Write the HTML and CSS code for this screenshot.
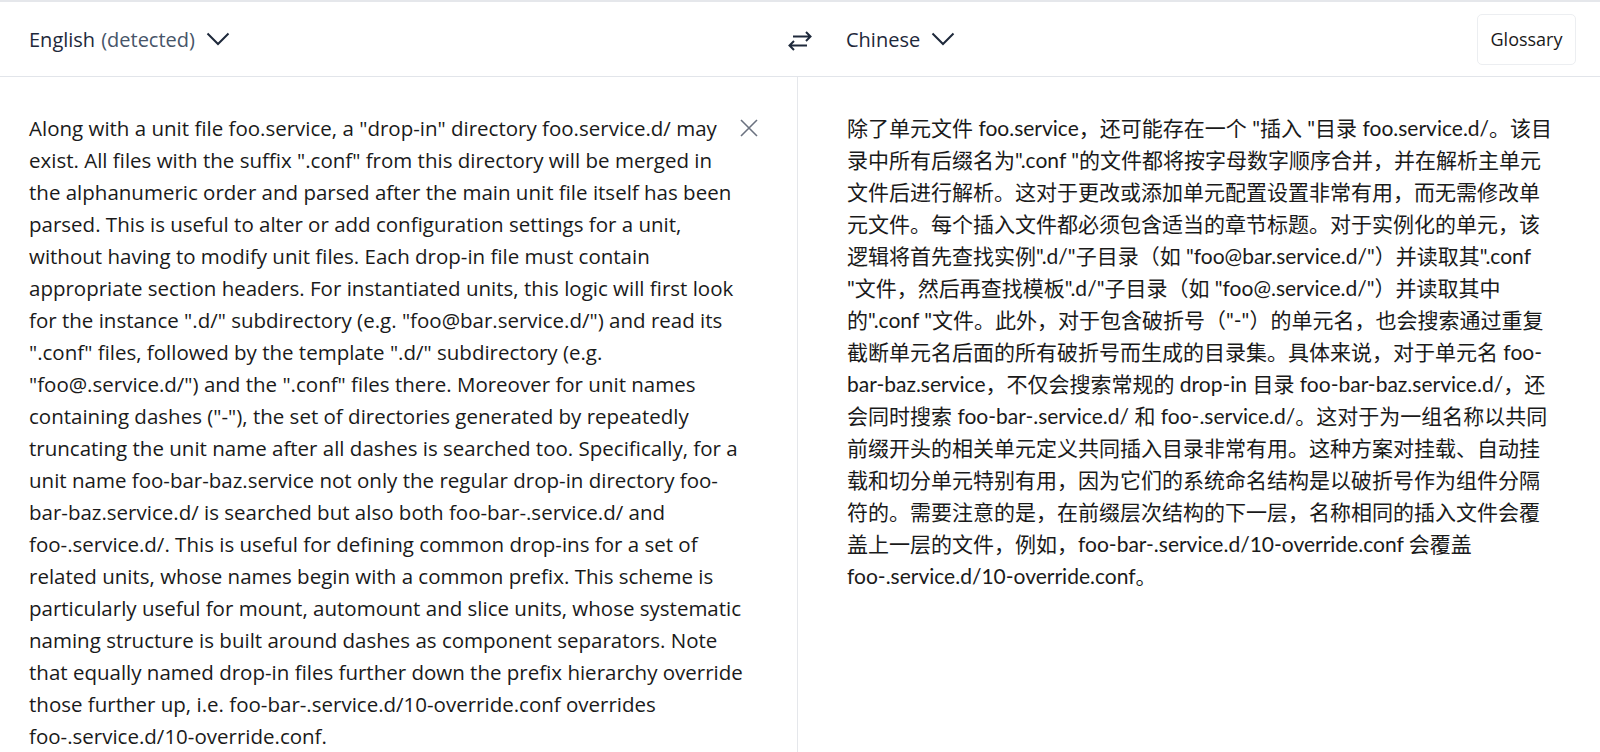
FILE: index.html
```html
<!DOCTYPE html>
<html lang="en">
<head>
    <meta charset="UTF-8">
    <meta name="viewport" content="width=device-width, initial-scale=1">
    <title>Translate</title>
    <link rel="stylesheet" href="styles.css">
</head>
<body>
    <div class="translator">
        <!-- 语言选择栏 -->
        <div class="lang-bar">
            <div class="lang-side">
                <button class="lang-select">
                    <span class="lang-name">English</span>
                    <span class="lang-note">(detected)</span>
                    <svg class="chevron" viewBox="0 0 24 14" width="24" height="14">
                        <path d="M1.5 1.5l10.5 10.5 10.5-10.5" />
                    </svg>
                </button>
            </div>
            <button class="swap-btn" title="Swap languages">
                <svg viewBox="0 0 24 24" width="24" height="24">
                    <path d="M5 9.5h17.5m-4.5-4.5l4.5 4.5-4.5 4.5" />
                    <path d="M19 18.5h-17.5m4.5-4.5l-4.5 4.5 4.5 4.5" />
                </svg>
            </button>
            <div class="lang-side lang-target">
                <button class="lang-select">
                    <span class="lang-name">Chinese</span>
                    <svg class="chevron" viewBox="0 0 24 14" width="24" height="14">
                        <path d="M1.5 1.5l10.5 10.5 10.5-10.5" />
                    </svg>
                </button>
                <button class="glossary-btn">Glossary</button>
            </div>
        </div>

        <!-- 原文和译文 -->
        <div class="panels">
            <div class="panel source-panel">
                <div class="source-text">Along with a unit file foo.service, a "drop-in" directory foo.service.d/ may exist. All files with the suffix ".conf" from this directory will be merged in the alphanumeric order and parsed after the main unit file itself has been parsed. This is useful to alter or add configuration settings for a unit, without having to modify unit files. Each drop-in file must contain appropriate section headers. For instantiated units, this logic will first look for the instance ".d/" subdirectory (e.g. "foo@bar.service.d/") and read its ".conf" files, followed by the template ".d/" subdirectory (e.g. "foo@.service.d/") and the ".conf" files there. Moreover for unit names containing dashes ("-"), the set of directories generated by repeatedly truncating the unit name after all dashes is searched too. Specifically, for a unit name foo-bar-baz.service not only the regular drop-in directory foo-bar-baz.service.d/ is searched but also both foo-bar-.service.d/ and foo-.service.d/. This is useful for defining common drop-ins for a set of related units, whose names begin with a common prefix. This scheme is particularly useful for mount, automount and slice units, whose systematic naming structure is built around dashes as component separators. Note that equally named drop-in files further down the prefix hierarchy override those further up, i.e. foo-bar-.service.d/10-override.conf overrides foo-.service.d/10-override.conf.</div>
                <button class="clear-btn" title="Clear">
                    <svg viewBox="0 0 18 18" width="18" height="18">
                        <path d="M1 1l16 16M17 1l-16 16" />
                    </svg>
                </button>
            </div>
            <div class="panel target-panel">
                <div class="target-text" lang="zh-CN">除了单元文件 foo.service，还可能存在一个 "插入 "目录 foo.service.d/。该目录中所有后缀名为".conf "的文件都将按字母数字顺序合并，并在解析主单元文件后进行解析。这对于更改或添加单元配置设置非常有用，而无需修改单元文件。每个插入文件都必须包含适当的章节标题。对于实例化的单元，该逻辑将首先查找实例".d/"子目录（如 "foo@bar.service.d/"）并读取其".conf "文件，然后再查找模板".d/"子目录（如 "foo@.service.d/"）并读取其中的".conf "文件。此外，对于包含破折号（"-"）的单元名，也会搜索通过重复截断单元名后面的所有破折号而生成的目录集。具体来说，对于单元名 foo-bar-baz.service，不仅会搜索常规的 drop-in 目录 foo-bar-baz.service.d/，还会同时搜索 foo-bar-.service.d/ 和 foo-.service.d/。这对于为一组名称以共同前缀开头的相关单元定义共同插入目录非常有用。这种方案对挂载、自动挂载和切分单元特别有用，因为它们的系统命名结构是以破折号作为组件分隔符的。需要注意的是，在前缀层次结构的下一层，名称相同的插入文件会覆盖上一层的文件，例如，foo-bar-.service.d/10-override.conf 会覆盖 foo-.service.d/10-override.conf。</div>
            </div>
        </div>
    </div>
</body>
</html>
```

FILE: styles.css
```css
* {
     box-sizing: border-box;
 }

body {
     margin: 0;
     background-color: #fff;
     font-family: "Open Sans", "Noto Sans CJK SC", sans-serif;
     color: #1a1a1a;
 }

button {
     font-family: inherit;
     background: none;
     border: none;
     padding: 0;
     cursor: pointer;
 }

.translator {
     border-top: 2px solid #e5e7eb;
     height: 100vh;
     display: flex;
     flex-direction: column;
 }

.lang-bar {
     height: 75px;
     flex-shrink: 0;
     display: grid;
     grid-template-columns: 1fr 24px 1fr;
     align-items: center;
     border-bottom: 1px solid #e2e5ea;
 }

.lang-side {
     display: flex;
     align-items: center;
     padding-left: 29px;
 }

.lang-target {
     padding-left: 34px;
     padding-right: 24px;
     justify-content: space-between;
 }

.lang-select {
     display: flex;
     align-items: center;
     font-size: 20px;
     color: #1e293b;
 }

.lang-name {
     font-weight: 500;
 }

.lang-note {
     margin-left: 6px;
     color: #475569;
 }

.chevron {
     margin-left: 11px;
     fill: none;
     stroke: #1e293b;
     stroke-width: 2;
 }

.swap-btn {
     display: flex;
     align-items: center;
     justify-content: center;
     width: 24px;
     height: 24px;
 }

.swap-btn svg {
     fill: none;
     stroke: #1e293b;
     stroke-width: 2;
 }

.glossary-btn {
     height: 51px;
     width: 99px;
     font-size: 18px;
     color: #1a1a1a;
     border: 1px solid #eceef1;
     border-radius: 5px;
 }

.panels {
     flex: 1;
     display: grid;
     grid-template-columns: 798px 1fr;
 }

.panel {
     padding-top: 35px;
     line-height: 32px;
 }

.source-panel {
     display: flex;
     align-items: flex-start;
     padding-left: 29px;
     border-right: 1px solid #e5e7eb;
     font-size: 20.5px;
 }

.source-text {
     width: 716px;
     flex-shrink: 0;
 }

.clear-btn {
     margin-left: -5px;
     margin-top: 7px;
     width: 18px;
     height: 18px;
     flex-shrink: 0;
 }

.clear-btn svg {
     display: block;
     fill: none;
     stroke: #6b7280;
     stroke-width: 1.6;
 }

.target-panel {
     padding-left: 49px;
     font-family: Lato, "Noto Sans CJK SC", sans-serif;
     font-size: 21px;
 }

.target-text {
     width: 712px;
 }
```
